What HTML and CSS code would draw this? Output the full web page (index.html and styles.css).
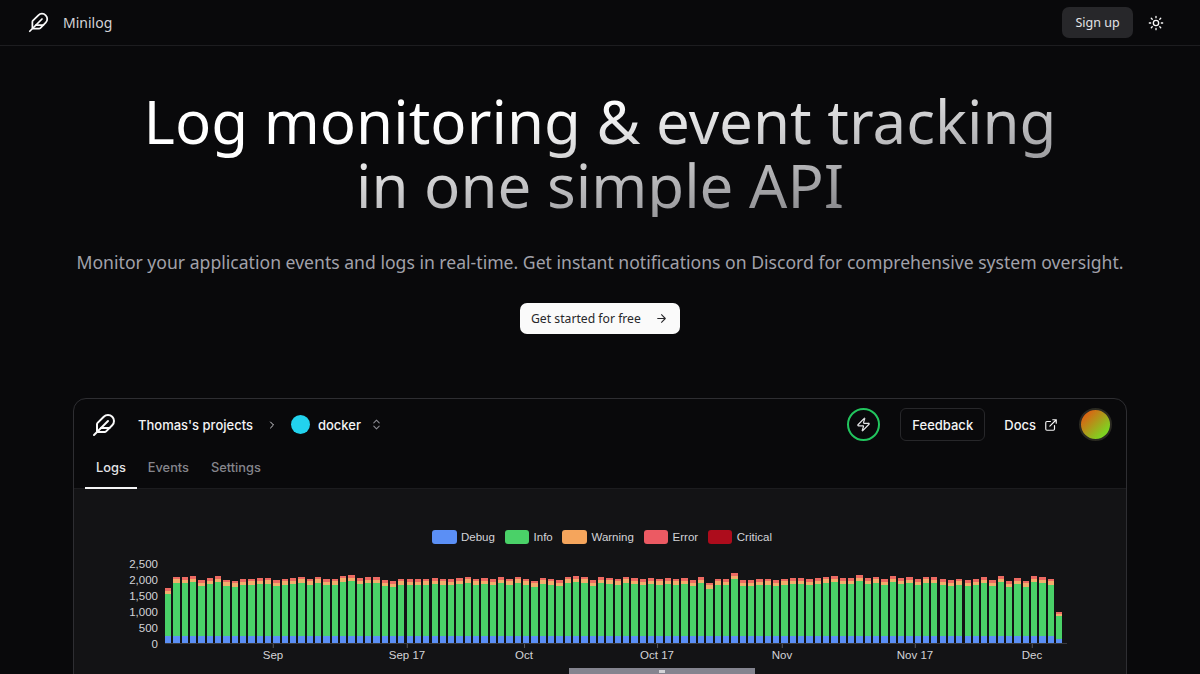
FILE: index.html
```html
<!DOCTYPE html>
<html lang="en">
<head>
<meta charset="utf-8">
<title>Minilog</title>
<link rel="stylesheet" href="styles.css">
</head>
<body>
<svg class="sprite" width="0" height="0" aria-hidden="true">
  <symbol id="feather" viewBox="0 0 24 24" fill="none" stroke="currentColor" stroke-width="2" stroke-linecap="round" stroke-linejoin="round">
    <path d="M12.67 19a2 2 0 0 0 1.416-.588l6.154-6.172a6 6 0 0 0-8.49-8.49L5.586 9.914A2 2 0 0 0 5 11.328V18a1 1 0 0 0 1 1z"/>
    <path d="M16 8 2 22"/>
    <path d="M17.5 15H9"/>
  </symbol>
</svg>
<header class="nav">
  <div class="brand">
    <svg class="brand-icon"><use href="#feather"/></svg>
    <span>Minilog</span>
  </div>
  <div class="nav-actions">
    <button class="signup">Sign up</button>
    <svg class="sun" viewBox="0 0 24 24" fill="none" stroke="currentColor" stroke-width="2" stroke-linecap="round" stroke-linejoin="round">
      <circle cx="12" cy="12" r="4"/>
      <path d="M12 2v2M12 20v2M4.93 4.93l1.41 1.41M17.66 17.66l1.41 1.41M2 12h2M20 12h2M6.34 17.66l-1.41 1.41M19.07 4.93l-1.41 1.41"/>
    </svg>
  </div>
</header>
<main class="hero">
  <h1 class="title">Log monitoring &amp; event tracking<br>in one simple API</h1>
  <p class="lead">Monitor your application events and logs in real-time. Get instant notifications on Discord for comprehensive system oversight.</p>
  <a class="cta" href="#">
    <span>Get started for free</span>
    <svg class="cta-arrow" viewBox="0 0 24 24" fill="none" stroke="currentColor" stroke-width="2" stroke-linecap="round" stroke-linejoin="round"><path d="M5 12h14M12 5l7 7-7 7"/></svg>
  </a>
</main>
<section class="app">
  <div class="app-top">
    <div class="crumbs">
      <svg class="app-logo"><use href="#feather"/></svg>
      <span class="crumb">Thomas's projects</span>
      <svg class="chev" viewBox="0 0 24 24" fill="none" stroke="currentColor" stroke-width="2" stroke-linecap="round" stroke-linejoin="round"><path d="m9 18 6-6-6-6"/></svg>
      <span class="dot"></span>
      <span class="crumb">docker</span>
      <svg class="updown" viewBox="0 0 24 24" fill="none" stroke="currentColor" stroke-width="2" stroke-linecap="round" stroke-linejoin="round"><path d="m7 15 5 5 5-5M7 9l5-5 5 5"/></svg>
    </div>
    <div class="app-actions">
      <span class="zap">
        <svg viewBox="0 0 24 24" fill="none" stroke="currentColor" stroke-width="2" stroke-linecap="round" stroke-linejoin="round"><path d="M4 14a1 1 0 0 1-.78-1.63l9.9-10.2a.5.5 0 0 1 .86.46l-1.92 6.02A1 1 0 0 0 13 10h7a1 1 0 0 1 .78 1.63l-9.9 10.2a.5.5 0 0 1-.86-.46l1.92-6.02A1 1 0 0 0 11 14z"/></svg>
      </span>
      <button class="feedback">Feedback</button>
      <span class="docs">Docs
        <svg viewBox="0 0 24 24" fill="none" stroke="currentColor" stroke-width="2" stroke-linecap="round" stroke-linejoin="round"><path d="M15 3h6v6M10 14 21 3M18 13v6a2 2 0 0 1-2 2H5a2 2 0 0 1-2-2V8a2 2 0 0 1 2-2h6"/></svg>
      </span>
      <span class="avatar"></span>
    </div>
  </div>
  <nav class="tabs">
    <span class="tab active">Logs</span>
    <span class="tab">Events</span>
    <span class="tab">Settings</span>
  </nav>
  <div class="panel">
    <ul class="legend">
      <li><i class="swatch debug"></i>Debug</li>
      <li><i class="swatch info"></i>Info</li>
      <li><i class="swatch warning"></i>Warning</li>
      <li><i class="swatch error"></i>Error</li>
      <li><i class="swatch critical"></i>Critical</li>
    </ul>
    <div class="chart">
      <div class="y-axis"><span>2,500</span><span>2,000</span><span>1,500</span><span>1,000</span><span>500</span><span>0</span></div>
      <div class="plot">
        <div class="bars" id="bars"></div>
        <div class="x-axis">
          <span class="tick t1">Sep</span>
          <span class="tick t2">Sep 17</span>
          <span class="tick t3">Oct</span>
          <span class="tick t4">Oct 17</span>
          <span class="tick t5">Nov</span>
          <span class="tick t6">Nov 17</span>
          <span class="tick t7">Dec</span>
        </div>
        <div class="brush"><span class="grip"></span></div>
      </div>
    </div>
  </div>
</section>
<script src="chart.js"></script>
</body>
</html>
```

FILE: styles.css
```css
* { box-sizing: border-box; }
html, body { margin: 0; height: 674px; overflow: hidden; }
body {
  background: #09090b;
  color: #fafafa;
  font-family: "Noto Sans", sans-serif;
}
.sprite { position: absolute; }
.nav {
  height: 46px;
  border-bottom: 1px solid #1d1d20;
  display: flex;
  align-items: center;
  justify-content: space-between;
  padding: 0 36px 0 28px;
}
.brand { display: flex; align-items: center; gap: 14px; font-size: 14px; color: #d4d4d8; }
.brand-icon { width: 21px; height: 21px; color: #fafafa; }
.nav-actions { display: flex; align-items: center; gap: 15px; }
.signup {
  width: 71px; height: 31px;
  border: 0; border-radius: 7px;
  background: #27272a; color: #e4e4e7;
  font: 12.5px "Noto Sans", sans-serif;
  padding: 0;
}
.sun { width: 16px; height: 16px; color: #fafafa; }
.hero { display: flex; flex-direction: column; align-items: center; }
.title {
  margin: 43px 0 0;
  font-size: 60px;
  line-height: 64px;
  font-weight: 400;
  text-align: center;
  background: linear-gradient(to bottom right, #fff 30%, #8a8a8e 85%);
  -webkit-background-clip: text;
  background-clip: text;
  color: transparent;
}
.lead { margin: 31px 0 0; font-size: 17.6px; line-height: 28px; color: #a1a1aa; white-space: nowrap; }
.cta {
  margin-top: 27px;
  width: 160px; height: 31px;
  display: flex; align-items: center; justify-content: space-between;
  padding: 0 12px 0 11px;
  background: #fafafa; color: #27272a;
  border-radius: 7px;
  font-size: 12.2px;
  text-decoration: none;
}
.cta-arrow { width: 13px; height: 13px; }
.app {
  margin: 64px 73px 0;
  height: 400px;
  border: 1px solid #2e2e32;
  border-radius: 13px;
  background: #09090b;
  font-family: Inter, sans-serif;
  overflow: hidden;
}
.app-top {
  height: 51px;
  display: flex; align-items: center; justify-content: space-between;
  padding: 0 14px 0 18px;
}
.crumbs { display: flex; align-items: center; }
.app-logo { width: 24px; height: 24px; margin-right: 22px; color: #fafafa; }
.crumb { font-size: 13px; font-weight: 500; color: #f4f4f5; }
.chev { width: 12px; height: 12px; margin: 0 13px; color: #d4d4d8; }
.dot { width: 19px; height: 19px; border-radius: 50%; background: #22d3ee; margin-right: 8px; }
.updown { width: 13px; height: 13px; margin-left: 9px; color: #8b8b92; }
.app-actions { display: flex; align-items: center; }
.zap {
  width: 33px; height: 33px; border: 2px solid #22c55e; border-radius: 50%;
  display: flex; align-items: center; justify-content: center;
  color: #e4e4e7;
}
.zap svg { width: 15px; height: 15px; }
.feedback {
  margin-left: 20px;
  width: 85px; height: 33px;
  background: transparent; border: 1px solid #27272a; border-radius: 6px;
  color: #f4f4f5;
  font: 500 13px Inter, sans-serif;
  padding: 0;
}
.docs { margin-left: 19px; display: flex; align-items: center; gap: 8px; font-size: 13px; font-weight: 500; color: #f4f4f5; }
.docs svg { width: 14px; height: 14px; }
.avatar {
  margin-left: 21px; width: 33px; height: 33px; border-radius: 50%;
  border: 2px solid #2b2a22;
  background: linear-gradient(135deg, #f04a10, #7ed321 80%);
}
.tabs { display: flex; height: 39px; padding: 0 11px; border-bottom: 1px solid #1c1c1f; }
.tab {
  padding: 0 11px;
  line-height: 35px;
  font-size: 12.8px;
  color: #85858c;
  font-weight: 500;
}
.tab.active { color: #e4e4e7; border-bottom: 2px solid #f4f4f5; height: 39px; }
.panel { background: #131315; height: 310px; padding-top: 40px; font-family: "Liberation Sans", sans-serif; }
.legend {
  list-style: none; margin: 0; padding: 0 0 0 358px;
  display: flex; gap: 9.7px;
  font-size: 11.5px; line-height: 16px; color: #d4d4d8;
}
.legend li { display: flex; align-items: center; gap: 4.5px; }
.swatch { width: 24.5px; height: 14px; border-radius: 3px; }
.debug { background: #5b8ff5; }
.info { background: #4ad168; }
.warning { background: #f5a55c; }
.error { background: #ec5a63; }
.critical { background: #ad0c1c; }
.chart { display: flex; margin-top: 11px; padding-left: 38px; }
.y-axis {
  width: 46px; height: 95px;
  display: flex; flex-direction: column; justify-content: space-between; align-items: flex-end;
  font-size: 11.5px; line-height: 16px; color: #d4d4d8;
}
.plot { margin-left: 7px; width: 902px; }
.bars {
  height: 88px;
  display: flex; align-items: flex-end;
  border-bottom: 1px solid #3a3a3e;
}
.bar { flex: 0 0 6.3px; margin-right: 2.04px; display: flex; flex-direction: column; }
.seg-red { background: #ec6a62; }
.seg-orange { background: #f3ad6c; }
.seg-green { background: #4ad168; }
.seg-blue { background: #5b8ff5; }
.x-axis { position: relative; height: 24px; font-size: 11.5px; color: #d4d4d8; }
.tick { position: absolute; top: 5px; transform: translateX(-50%); }
.tick::before {
  content: ""; position: absolute; left: 50%; top: -5px;
  width: 1px; height: 4px; background: #55555a;
}
.t1 { left: 108px; }
.t2 { left: 242px; }
.t3 { left: 359px; }
.t4 { left: 492px; }
.t5 { left: 617px; }
.t6 { left: 750px; }
.t7 { left: 867px; }
.brush {
  margin-left: 404px; width: 186px; height: 12px;
  background: #84848f; display: flex; justify-content: center;
}
.grip { width: 6px; height: 3px; margin-top: 2px; background: #d4d4d8; }
```

FILE: chart.js
```js
var tops = [
  55,20,22,19,30,25,19,29,32,27,26,25,23,30,26,24,20,26,20,27,26,17,15,25,21,22,30,33,26,27,27,26,25,26,27,25,
  20,26,24,27,21,26,20,26,32,23,26,31,20,18,20,30,22,23,26,20,25,27,24,26,24,26,25,30,21,38,26,28,10,30,30,28,
  26,30,26,24,24,27,25,20,19,25,25,16,24,20,27,19,25,21,28,20,21,27,30,26,30,28,22,30,18,33,25,32,19,21,26,126
];
var wrap = document.getElementById("bars");

function seg(cls, h) {
  var el = document.createElement("div");
  el.className = cls;
  el.style.height = h + "px";
  return el;
}

tops.forEach(function (v) {
  var total = 73 - v / 3;
  var last = v > 100;
  var red = last ? 2 : 2.5;
  var orange = last ? 2 : 3.5;
  var blue = last ? 4 : 7;
  var bar = document.createElement("div");
  bar.className = "bar";
  bar.append(
    seg("seg-red", red),
    seg("seg-orange", orange),
    seg("seg-green", total - red - orange - blue),
    seg("seg-blue", blue)
  );
  wrap.appendChild(bar);
});
```
